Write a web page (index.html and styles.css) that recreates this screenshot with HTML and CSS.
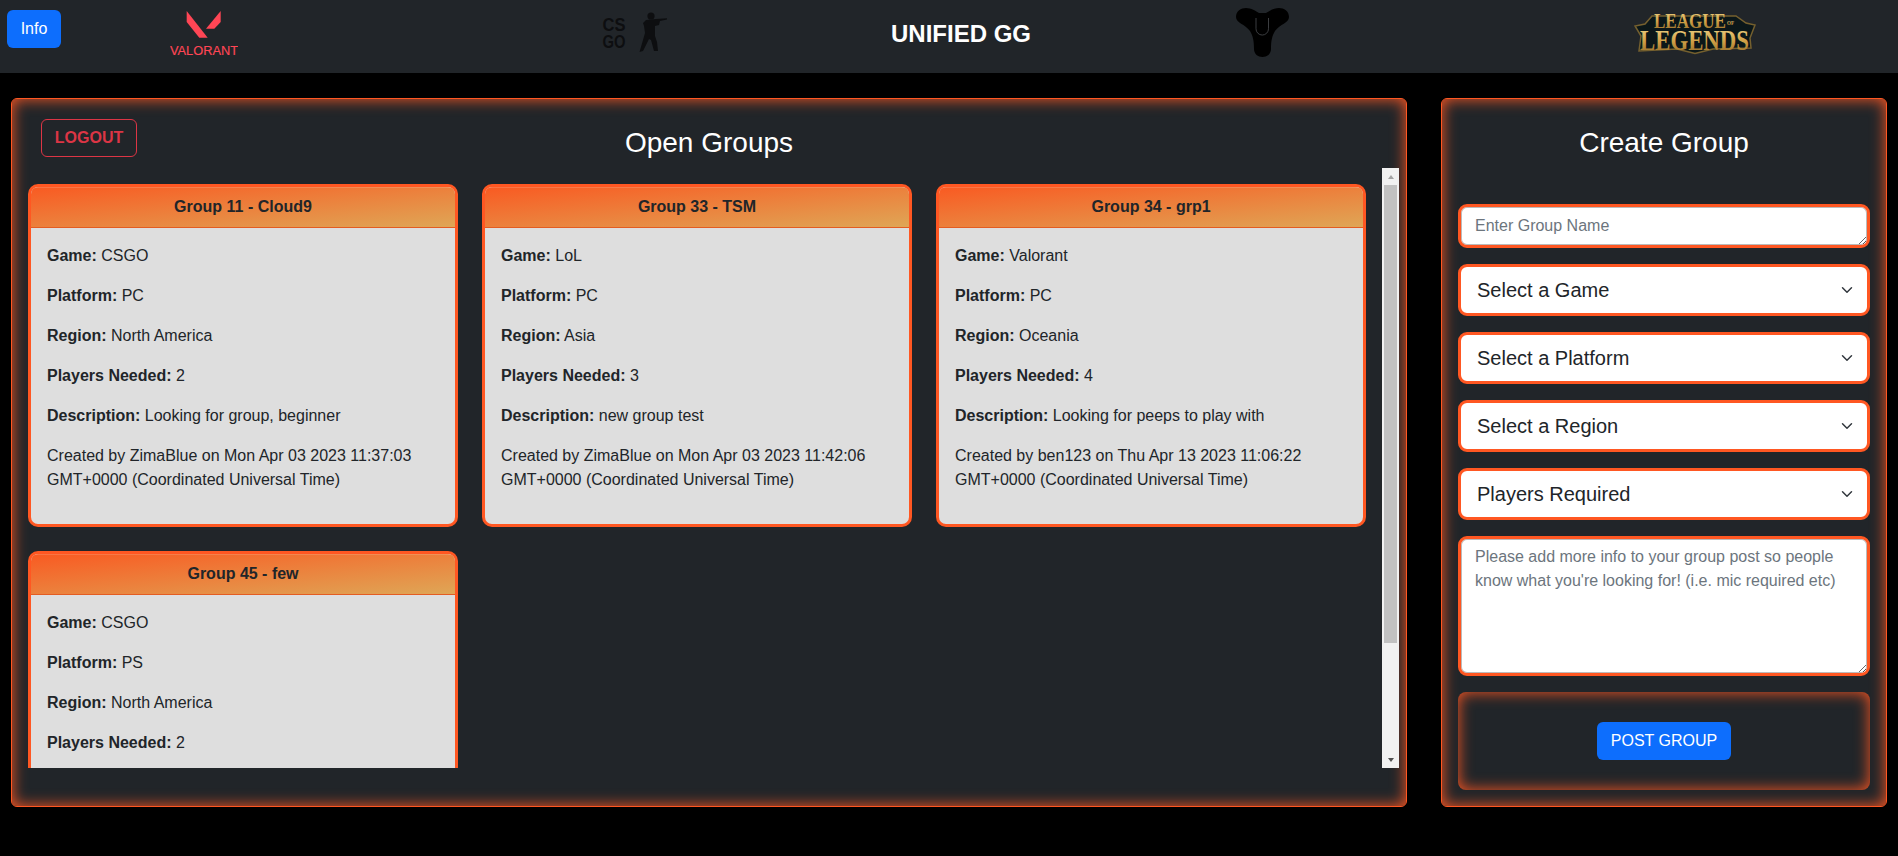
FILE: index.html
```html
<!DOCTYPE html>
<html lang="en">
<head>
    <meta charset="UTF-8">
    <meta name="viewport" content="width=device-width, initial-scale=1.0">
    <title>Unified GG</title>
    <link rel="stylesheet" href="styles.css">
</head>
<body>
    <nav class="navbar">
        <button class="btn btn-info">Info</button>

        <!-- Valorant -->
        <svg class="logo logo-valorant" viewBox="170 0 68 73" width="68" height="73">
            <polygon fill="#ff4655" points="186.7,11 207.7,37.7 199.3,37.7 186.7,22"/>
            <polygon fill="#ff4655" points="220.7,11 206,28.7 214.3,28.7 220.7,22"/>
            <text class="valorant-text" x="170" y="55" textLength="68" lengthAdjust="spacingAndGlyphs">VALORANT</text>
        </svg>

        <!-- CS GO -->
        <svg class="logo logo-csgo" viewBox="602 0 66 73" width="66" height="73">
            <text class="csgo-text" x="602.5" y="30.7" textLength="23" lengthAdjust="spacingAndGlyphs">CS</text>
            <text class="csgo-text" x="602.5" y="48" textLength="23" lengthAdjust="spacingAndGlyphs">GO</text>
            <circle cx="651" cy="16" r="3.6" fill="#0d0e10"/>
            <polygon fill="#0d0e10" points="646,20 656,19 667,18.3 667,19.6 660,21 659,25 655,26 655,36 657,42 658,51 654,51 651,40 649,39 643,51 639.5,52 643,40 645,33 644,26 643,23"/>
        </svg>

        <h1 class="brand">UNIFIED GG</h1>

        <!-- Destiny -->
        <svg class="logo logo-destiny" viewBox="1236 0 53 73" width="53" height="73">
            <path fill="#000" d="M1236 17C1236 11 1241 8 1246 8C1251 8 1256 11 1259 13L1266 13C1269 11 1274 8 1279 8C1284 8 1289 11 1289 17C1289 23 1280 24 1275 31C1272 36 1271 41 1271 49C1271 54 1267 57 1262.5 57C1258 57 1254 54 1254 49C1254 41 1253 36 1250 31C1245 24 1236 23 1236 17Z"/>
            <path fill="none" stroke="#3b3d40" d="M1256 18V28.8a6.2 6.2 0 0 0 12.5 0V18"/>
        </svg>

        <!-- League of Legends -->
        <svg class="logo logo-lol" viewBox="0 0 122 73" width="122" height="73">
            <defs>
                <linearGradient id="lol-gold" x1="0" y1="0" x2="0" y2="1">
                    <stop offset="0" stop-color="#f3dc92"/>
                    <stop offset="0.55" stop-color="#cf9f45"/>
                    <stop offset="1" stop-color="#8a6426"/>
                </linearGradient>
            </defs>
            <polygon fill="#0b1719" stroke="#75602e" stroke-width="1.5" points="18,16 102,16 112,23 121,25 116,38 117,48 79,49 61,53.5 43,49 5,51 7,36 1,26 11,24"/>
            <text class="lol-text lol-top" x="20" y="28" textLength="72" lengthAdjust="spacingAndGlyphs">LEAGUE</text>
            <text class="lol-text lol-of" x="93" y="25" textLength="7" lengthAdjust="spacingAndGlyphs">OF</text>
            <text class="lol-text lol-bottom" x="6" y="50" textLength="109" lengthAdjust="spacingAndGlyphs">LEGENDS</text>
        </svg>
    </nav>

    <main class="content">
        <section class="panel panel-groups">
            <div class="panel-head">
                <button class="btn btn-logout">LOGOUT</button>
                <h3 class="panel-title">Open Groups</h3>
            </div>

            <div class="group-scroll">
                <div class="group-list">
                    <article class="group-card">
                        <header class="group-header">Group 11 - Cloud9</header>
                        <div class="group-body">
                            <p><b>Game:</b> CSGO</p>
                            <p><b>Platform:</b> PC</p>
                            <p><b>Region:</b> North America</p>
                            <p><b>Players Needed:</b> 2</p>
                            <p><b>Description:</b> Looking for group, beginner</p>
                            <p>Created by ZimaBlue on Mon Apr 03 2023 11:37:03 GMT+0000 (Coordinated Universal Time)</p>
                        </div>
                    </article>
                    <article class="group-card">
                        <header class="group-header">Group 33 - TSM</header>
                        <div class="group-body">
                            <p><b>Game:</b> LoL</p>
                            <p><b>Platform:</b> PC</p>
                            <p><b>Region:</b> Asia</p>
                            <p><b>Players Needed:</b> 3</p>
                            <p><b>Description:</b> new group test</p>
                            <p>Created by ZimaBlue on Mon Apr 03 2023 11:42:06 GMT+0000 (Coordinated Universal Time)</p>
                        </div>
                    </article>
                    <article class="group-card">
                        <header class="group-header">Group 34 - grp1</header>
                        <div class="group-body">
                            <p><b>Game:</b> Valorant</p>
                            <p><b>Platform:</b> PC</p>
                            <p><b>Region:</b> Oceania</p>
                            <p><b>Players Needed:</b> 4</p>
                            <p><b>Description:</b> Looking for peeps to play with</p>
                            <p>Created by ben123 on Thu Apr 13 2023 11:06:22 GMT+0000 (Coordinated Universal Time)</p>
                        </div>
                    </article>
                    <article class="group-card">
                        <header class="group-header">Group 45 - few</header>
                        <div class="group-body">
                            <p><b>Game:</b> CSGO</p>
                            <p><b>Platform:</b> PS</p>
                            <p><b>Region:</b> North America</p>
                            <p><b>Players Needed:</b> 2</p>
                        </div>
                    </article>
                </div>

                
                <div class="scrollbar">
                    <span class="scroll-arrow"><i class="arrow-up"></i></span>
                    <div class="scroll-track"><div class="scroll-thumb"></div></div>
                    <span class="scroll-arrow"><i class="arrow-down"></i></span>
                </div>
            </div>
        </section>

        <section class="panel panel-create">
            <h3 class="panel-title create-title">Create Group</h3>

            <form class="create-form">
                <textarea class="field field-name" rows="1" placeholder="Enter Group Name"></textarea>
                <select class="field-select">
                    <option>Select a Game</option>
                </select>
                <select class="field-select">
                    <option>Select a Platform</option>
                </select>
                <select class="field-select">
                    <option>Select a Region</option>
                </select>
                <select class="field-select">
                    <option>Players Required</option>
                </select>
                <textarea class="field field-info" placeholder="Please add more info to your group post so people know what you're looking for! (i.e. mic required etc)"></textarea>
                <div class="post-box">
                    <button type="button" class="btn btn-post">POST GROUP</button>
                </div>
            </form>
        </section>
    </main>
</body>
</html>
```

FILE: styles.css
```css
* {
    box-sizing: border-box;
}

body {
    margin: 0;
    height: 856px;
    overflow: hidden;
    background-color: black;
    color: #212529;
    font-family: "Liberation Sans", Arial, sans-serif;
    font-size: 16px;
    line-height: 24px;
}

/* Buttons */
.btn {
    height: 38px;
    padding: 0 12px;
    border: 1px solid transparent;
    border-radius: 6px;
    font-family: inherit;
    font-size: 16px;
    line-height: 24px;
}

.btn-info,
.btn-post {
    background-color: #0d6efd;
    color: white;
}

.btn-info {
    flex: none;
    width: 54px;
    margin-bottom: 15px;
    padding: 0;
}

.btn-logout {
    justify-self: start;
    width: 96px;
    padding: 0;
    background: transparent;
    border-color: #dc3545;
    color: #dc3545;
    font-weight: bold;
}

.btn-post {
    width: 134px;
    padding: 0;
}

/* Navbar */
.navbar {
    display: flex;
    align-items: center;
    height: 73px;
    padding-left: 7px;
    background-color: #212529;
}

.logo {
    flex: none;
    display: block;
}

.logo-valorant {
    margin-left: 109px;
}

.logo-csgo {
    margin-left: 364px;
}

.logo-destiny {
    margin-left: 205px;
}

.logo-lol {
    margin-left: 345px;
}

.valorant-text {
    fill: #ff4655;
    stroke: #ff4655;
    stroke-width: 0.15px;
    font-family: "Liberation Sans", sans-serif;
    font-size: 12.5px;
}

.csgo-text {
    fill: #0d0e10;
    font-family: "Liberation Sans", sans-serif;
    font-size: 17.5px;
    font-weight: bold;
}

.lol-text {
    fill: url(#lol-gold);
    font-family: "Liberation Serif", serif;
    font-weight: bold;
}

.lol-top {
    font-size: 22px;
}

.lol-of {
    font-size: 6px;
}

.lol-bottom {
    font-size: 29px;
}

.brand {
    flex: none;
    width: 140px;
    margin: 0 0 7px 223px;
    color: white;
    font-size: 24px;
    font-weight: bold;
    line-height: 29px;
    white-space: nowrap;
}

/* Main panels */
.content {
    display: grid;
    grid-template-columns: 1396px 446px;
    column-gap: 34px;
    padding: 25px 11px 0;
}

.panel {
    height: 709px;
    background-color: #212529;
    border: 1px solid #ff5722;
    border-radius: 6px;
    box-shadow: inset 0 0 15px #ff5722;
}

.panel-groups {
    display: flex;
    flex-direction: column;
    padding: 20px 7px 38px 16px;
}

.panel-create {
    padding: 27px 16px 16px;
}

.panel-head {
    display: grid;
    grid-template-columns: 1fr auto 1fr;
    height: 49px;
    margin-right: 22px;
    padding-left: 13px;
}

.panel-title {
    margin: 7px 0 0;
    color: white;
    font-size: 28px;
    font-weight: normal;
    line-height: 34px;
    text-align: center;
}

.create-title {
    margin: 0 0 44px;
}

/* Group cards */
.group-scroll {
    flex: 1;
    display: flex;
    min-height: 0;
}

.group-list {
    flex: 1;
    display: grid;
    grid-template-columns: repeat(3, 430px);
    grid-auto-rows: max-content;
    gap: 24px;
    padding: 16px 16px 0 0;
    overflow: hidden;
}

.scrollbar {
    flex: none;
    display: flex;
    flex-direction: column;
    width: 17px;
    background-color: #f1f1f1;
}

.scroll-arrow {
    display: flex;
    justify-content: center;
    align-items: center;
    height: 17px;
}

.arrow-up {
    border: solid transparent;
    border-width: 0 3.5px 4px;
    border-bottom-color: #a3a3a3;
}

.arrow-down {
    border: solid transparent;
    border-width: 4px 3.5px 0;
    border-top-color: #505050;
}

.scroll-track {
    flex: 1;
    padding: 0 2px;
}

.scroll-thumb {
    height: 458px;
    background-color: #c1c1c1;
}

.group-card {
    background-color: #dedede;
    border: 3px solid #ff5722;
    border-radius: 10px;
    overflow: hidden;
}

.group-header {
    height: 41px;
    padding-top: 8px;
    background-image: linear-gradient(to bottom right, #f95a22, #dfa656);
    border-bottom: 1px solid #e45c22;
    box-shadow: inset 0 1px rgba(255, 255, 255, 0.15);
    font-weight: bold;
    text-align: center;
}

.group-body {
    padding: 16px;
}

.group-body p {
    margin: 0 0 16px;
}

/* Create form */
.create-form {
    display: flex;
    flex-direction: column;
    gap: 16px;
}

.field {
    display: block;
    width: 100%;
    padding: 6px 14px;
    background-color: white;
    border: 3px solid #ff5722;
    border-radius: 9px;
    box-shadow: inset 0 0 0 1px #bbbbbb;
    color: #212529;
    font-family: inherit;
    font-size: 16px;
    line-height: 24px;
    resize: vertical;
}

.field::placeholder {
    color: #6c757d;
    opacity: 1;
}

.field-name {
    height: 44px;
    padding-top: 7px;
}

.field-info {
    height: 140px;
}

.field-select {
    display: block;
    width: 100%;
    height: 52px;
    padding: 0 16px;
    appearance: none;
    background-color: white;
    background-image: url("data:image/svg+xml,%3Csvg xmlns='http://www.w3.org/2000/svg' viewBox='0 0 16 16'%3E%3Cpath fill='none' stroke='%23343a40' stroke-linecap='round' stroke-linejoin='round' stroke-width='2' d='M2 5l6 6 6-6'/%3E%3C/svg%3E");
    background-repeat: no-repeat;
    background-position: right 14px center;
    background-size: 12px 12px;
    border: 3px solid #ff5722;
    border-radius: 9px;
    color: #212529;
    font-family: inherit;
    font-size: 20px;
}

.post-box {
    display: flex;
    justify-content: center;
    align-items: center;
    height: 98px;
    border-radius: 8px;
    box-shadow: inset 0 0 15px #ff5722;
}
```
